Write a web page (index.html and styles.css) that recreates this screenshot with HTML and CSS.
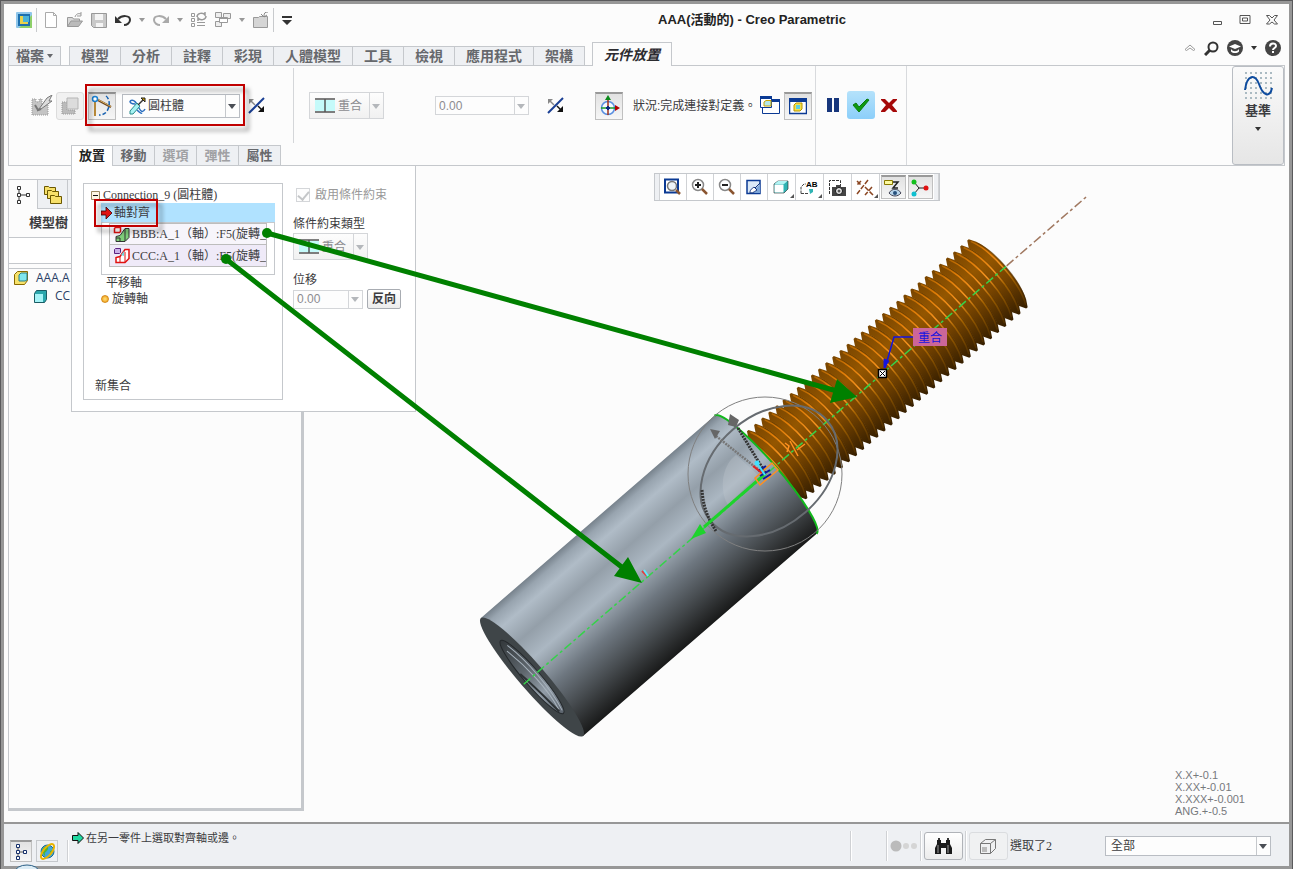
FILE: index.html
```html
<!DOCTYPE html>
<html lang="zh-Hant">
<head>
  <meta charset="UTF-8" />
  <meta name="viewport" content="width=device-width, initial-scale=1.0">
  <title>AAA(活動的) - Creo Parametric</title>
  <link rel="stylesheet" href="styles.css">
</head>
<body>
<div class="desktop">
<div class="window">

  <!-- Title bar -->
  <header class="titlebar">
    <div class="quick">
      <svg class="ic16" viewBox="0 0 16 16"><rect width="16" height="16" rx="1" fill="#8fc6ea"/><path d="M16 3v13H3z" fill="#8ed06a"/><rect x="2" y="2" width="12" height="12" fill="#1c6fae"/><rect x="4" y="4" width="8" height="8" fill="#e8d24a"/><rect x="7" y="4" width="6" height="6" fill="#49b3d8"/></svg>
      <span class="qsep"></span>
      <button title="新建"><svg class="ic16" viewBox="0 0 16 16"><path d="M2.500 .5h8l3 3v12h-11z" fill="#fff" stroke="#aaa"/><path d="M10.500 .5v3h3" fill="none" stroke="#aaa"/></svg></button>
      <button title="開啟"><svg class="ic16" viewBox="0 0 16 16"><path d="M.5 14.500v-9h5l1 1.500h6v2" fill="#d8d8d8" stroke="#999"/><path d="M.5 14.500L4 9h11.500l-4 5.500z" fill="#bbb" stroke="#999"/><path d="M8 5c1-3 3-4 6-3m0-2v4h-4" fill="none" stroke="#999"/></svg></button>
      <button title="儲存"><svg class="ic16" viewBox="0 0 16 16"><path d="M.5 1.500h15v14h-13l-2-2z" fill="#c9c9c9" stroke="#999"/><path d="M4 2h8v6H4zM5 11h7v4H5z" fill="#f5f5f5"/></svg></button>
      <button class="undo" title="復原"><svg class="ic16" viewBox="0 0 16 16"><path d="M3 7c4-4 12-4 12 1 0 3-3 5-6 5" fill="none" stroke="#333" stroke-width="2"/><path d="M0 4v7h7z" fill="#333"/></svg></button>
      <span class="caret light"></span>
      <button title="重做"><svg class="ic16" viewBox="0 0 16 16"><path d="M13 7C9 3 1 3 1 8c0 3 3 5 6 5" fill="none" stroke="#aaa" stroke-width="2"/><path d="M16 4v7H9z" fill="#aaa"/></svg></button>
      <span class="caret light"></span>
      <button title="重新產生"><svg class="ic16" viewBox="0 0 16 16" fill="none" stroke="#999"><path d="M.5 1.500h3v3h-3zM.5 6.500h3v3h-3zM.5 11.500h3v3h-3zM6 10.500h8M6 13.500h8"/><path d="M6 5c0-4 6-5 8-2V0M15 4c0 4-6 5-8 2v3" stroke-width="1.500"/></svg></button>
      <button title="視窗"><svg class="ic16" viewBox="0 0 16 16" fill="#eee" stroke="#999"><path d="M8.500 1.500h7v5h-7zM.5 .5h6v5h-6zM.5 9.500h6v5h-6z"/><path d="M4.500 5.500h8v5h-8z" fill="#fff"/><path d="M4.500 6.500h8"/></svg></button>
      <span class="caret light"></span>
      <button title="關閉"><svg class="ic16" viewBox="0 0 16 16"><path d="M.5 15.500v-10h5l1-1h8v11z" fill="#d5d5d5" stroke="#999"/><path d="M15 0c-3 0-4 1-4 4m-3-2l3 3 3-2" fill="none" stroke="#888"/></svg></button>
      <span class="qsep"></span>
      <button class="custom" title="自訂"><svg width="10" height="9" viewBox="0 0 10 9"><path d="M0 0h10v2H0zM0 4h10L5 9z" fill="#333"/></svg></button>
    </div>
    <h1>AAA(活動的) - Creo Parametric</h1>
    <div class="winbtns">
      <button title="最小化"><svg width="12" height="12" viewBox="0 0 12 12"><path d="M1.500 7.500h8v3h-8z" fill="none" stroke="#555"/></svg></button>
      <button title="最大化"><svg width="12" height="12" viewBox="0 0 12 12"><path d="M1 1.500h10v8H1zM3.500 4h5v3h-5z" fill="none" stroke="#555"/></svg></button>
      <button title="關閉視窗"><svg width="12" height="12" viewBox="0 0 12 12"><path d="M.5 1.500h3L6 4l2.500-2.500h3L8 6l3.500 4h-3L6 8l-2.500 2h-3L4 6z" fill="none" stroke="#555"/></svg></button>
    </div>
  </header>

  <!-- Ribbon tabs -->
  <nav class="tabs">
    <button class="tab file">檔案<span class="caret"></span></button>
    <div class="tabgroup">
      <button class="tab">模型</button>
      <button class="tab">分析</button>
      <button class="tab">註釋</button>
      <button class="tab">彩現</button>
      <button class="tab">人體模型</button>
      <button class="tab">工具</button>
      <button class="tab">檢視</button>
      <button class="tab">應用程式</button>
      <button class="tab">架構</button>
    </div>
    <button class="tab active">元件放置</button>
    <div class="help">
      <button title="最小化功能區"><svg width="12" height="8" viewBox="0 0 12 8"><path d="M1 5.500L6 1l5 4.500-1.500 1L6 4 2.500 6.500z" fill="#fff" stroke="#999"/></svg></button>
      <button title="搜尋"><svg width="15" height="15" viewBox="0 0 15 15"><circle cx="9" cy="6" r="4.500" fill="none" stroke="#333" stroke-width="2"/><path d="M6 9l-5 5" stroke="#333" stroke-width="3"/></svg></button>
      <button title="學習"><svg class="ic16" viewBox="0 0 16 16"><circle cx="8" cy="8" r="8" fill="#444"/><path d="M2 6.500L8 4l6 2.500L8 9z" fill="#fff"/><path d="M4 9c2 3 6 3 8 0v2.500c-2 2-6 2-8 0z" fill="#fff"/></svg></button>
      <span class="caret dark"></span>
      <button title="說明"><svg class="ic16" viewBox="0 0 16 16"><circle cx="8" cy="8" r="8" fill="#444"/><path d="M5 6.500C5 2.500 11 2.500 11 6c0 2-3 2-3 4" fill="none" stroke="#fff" stroke-width="2"/><path d="M7 11h2v2H7z" fill="#fff"/></svg></button>
    </div>
  </nav>

  <!-- Component placement dashboard -->
  <section class="ribbon">
    <div class="dash">
      <div class="dashrow">
        <div class="group first">
          <svg class="edit" width="22" height="22" viewBox="0 0 22 22"><path d="M1 4h4v3h3V4h3v6h6v10H1z" fill="#c4c4c4"/><path d="M1 4h4v3h3V4h3v6h6v10H1z" fill="none" stroke="#999" stroke-dasharray="1 1"/><path d="M8 14L16 3l5-3-3 6h3L10 14l-4 2z" fill="#ddd" stroke="#777"/><path d="M4 10l3 5 3-1" fill="none" stroke="#777" stroke-width="2"/></svg>
          <button class="tool off" title="介面"><svg width="18" height="18" viewBox="0 0 18 18"><path d="M1 5h5v8h8v4H1z" fill="#bbb" stroke="#999" stroke-dasharray="1 1"/><path d="M6 1h11v11H6z" fill="#dcdcdc" stroke="#b5b5b5"/></svg></button>
          <button class="tool pressed" title="連接"><svg width="22" height="22" viewBox="0 0 22 22"><path d="M4 4v17" stroke="#b88a3a" stroke-width="2"/><path d="M5 4l15 8" stroke="#6b4520" stroke-width="2"/><path d="M5 3.500l15 8" stroke="#d8b060" stroke-width="1"/><circle cx="4" cy="4" r="2.500" fill="#fff" stroke="#1a7fd0" stroke-width="1.500"/><path d="M15 1c3 2 5 9 1 15-2 3-5 4-8 4" fill="none" stroke="#1660b0" stroke-width="1.500" stroke-dasharray="4 2"/></svg></button>
        </div>
        <label class="combo kind">
          <svg width="18" height="18" viewBox="0 0 18 18"><path d="M2 4c4-3 7 3 9 7s4 5 6 1M2 4c0 3 3 3 5 3M9 13c2 2 4 4 5 3" fill="none" stroke="#2a6fc0" stroke-width="1.500"/><path d="M2 14l7-8 3 3-7 8H2z" fill="#a6f3f3" stroke="#2b8c8c"/><path d="M10 8l6-6" stroke="#333" stroke-width="1.500"/><path d="M13 1h4v4z" fill="#c79a00" stroke="#222"/></svg>
          <select aria-label="連接類型"><option>圓柱體</option></select>
        </label>
        <svg class="flip" width="17" height="17" viewBox="0 0 17 17"><path d="M1 16L16 1" stroke="#1a3f94" stroke-width="2"/><path d="M1 2h5L1 7z" fill="#888"/><path d="M3 4l4 4" stroke="#888" stroke-width="1.500"/><path d="M16 15h-6l6-6z" fill="#111"/><path d="M10 9l4 4" stroke="#111" stroke-width="1.500"/></svg>
        <span class="vsep"></span>
        <label class="combo type off">
          <svg width="21" height="15" viewBox="0 0 21 15"><path d="M0 2h20v11H0z" fill="#c5fafa"/><path d="M0 1h20M0 14h20M10 1v13" stroke="#555" stroke-width="1.500"/></svg>
          <select aria-label="條件約束" disabled><option>重合</option></select>
        </label>
        <div class="combo value off"><input type="text" value="0.00" aria-label="偏移" disabled></div>
        <svg class="flip two" width="17" height="17" viewBox="0 0 17 17"><path d="M1 16L16 1" stroke="#1a3f94" stroke-width="2"/><path d="M1 2h5L1 7z" fill="#888"/><path d="M3 4l4 4" stroke="#888" stroke-width="1.500"/><path d="M16 15h-6l6-6z" fill="#111"/><path d="M10 9l4 4" stroke="#111" stroke-width="1.500"/></svg>
        <button class="tool pressed csys" title="3D 拖曳器"><svg width="22" height="22" viewBox="0 0 22 22"><circle cx="10" cy="13" r="6.500" fill="#f4faff" stroke="#5a8fe0" stroke-width="1.500"/><path d="M10 4v16" stroke="#a03018" stroke-width="1.500"/><path d="M3 13h15" stroke="#1a9a2a" stroke-width="1.500"/><path d="M8 13h4M10 11v4" stroke="#0a2a80" stroke-width="2"/><path d="M7 5l3-5 3 5z" fill="#0a8a1a"/><path d="M17 10l5 3-5 3z" fill="#b00000"/></svg></button>
        <span class="status">狀況:完成連接對定義。</span>
        <div class="group">
          <svg width="20" height="19" viewBox="0 0 20 19"><path d="M2.500 6v11.500h17V4" fill="#fff" stroke="#0b3a94"/><path d="M12 3h8v3h-8z" fill="#0b3a94"/><path d="M.5 1.500h11v10H.5z" fill="#fff" stroke="#0b3a94"/><path d="M0 0h12v3H0z" fill="#0b3a94"/><path d="M4 6l2-1.500h5V10H4z" fill="#b5e8e8" stroke="#c9a400"/></svg>
          <button class="tool pressed" title="在組合視窗顯示"><svg width="18" height="17" viewBox="0 0 18 17"><path d="M.5 .5h17v15H.5z" fill="#fff" stroke="#0b3a94" stroke-width="1.500"/><path d="M0 0h18v4H0z" fill="#0b3a94"/><path d="M5 7l2-2h6v6l-2 2H5z" fill="#f3e14a" stroke="#b79400"/><path d="M7 7h4v4H7z" fill="#5fd0e0"/></svg></button>
        </div>
      </div>
      <div class="subtabs">
        <button class="active">放置</button>
        <button>移動</button>
        <button class="off">選項</button>
        <button class="off">彈性</button>
        <button>屬性</button>
      </div>
    </div>
    <div class="actions">
      <button class="tool bare" title="暫停"><svg width="12" height="14" viewBox="0 0 12 14"><path d="M0 0h5v14H0zM7 0h5v14H7z" fill="#17367c"/></svg></button>
      <button class="tool ok" title="確定"><svg width="18" height="15" viewBox="0 0 18 15"><path d="M1 7l3-2 3 4 8-8 2 1-10 12z" fill="#0e9a10" stroke="#0a7a0c"/></svg></button>
      <button class="tool bare" title="取消"><svg width="16" height="15" viewBox="0 0 16 15"><path d="M0 1h4l4 4 4-4h4v1l-5 5 5 6v1h-4L8 10l-4 4H0v-1l5-6-5-5z" fill="#a50808"/></svg></button>
    </div>
    <button class="datum">
      <svg width="29" height="28" viewBox="0 0 29 28"><path d="M1 1h28M1 6h28M1 11h28M1 16h28M1 21h28M1 26h28" stroke="#aabac2" stroke-width="2" stroke-dasharray="2 3"/><path d="M1 18C3 2 11 2 15 12c4 12 11 14 13 4" fill="none" stroke="#0c4a9e" stroke-width="2"/></svg>
      <span>基準</span>
      <span class="caret dark"></span>
    </button>
  </section>

  <!-- Work area -->
  <main class="workspace">
    <aside class="navigator">
      <div class="navtabs">
        <button class="active" title="模型樹"><svg width="14" height="18" viewBox="0 0 14 18" fill="none" stroke="#333"><path d="M1.500 .5h3v3h-3zM1.500 7.500h3v3h-3zM1.500 14.500h3v3h-3zM10.500 7.500h3v3h-3zM3 4v3M3 11v3M5 9h5"/></svg></button>
        <button title="資料夾"><svg width="18" height="19" viewBox="0 0 18 19" fill="#f7e06a" stroke="#6b5800"><path d="M.5 9.500v-8h4l1 1h6v7z"/><path d="M3.500 13.500v-8h4l1 1h6v7z"/><path d="M6.500 18.500v-8h4l1 1h6v7z"/></svg></button>
        <button title="我的最愛"></button>
      </div>
      <div class="navpanel">
        <h2>模型樹</h2>
        <div class="filter"></div>
        <ul class="tree">
          <li><svg width="14" height="15" viewBox="0 0 14 15"><path d="M.5 3.500l3-3h10v9l-3 4H.5z" fill="#f7e26a" stroke="#8a6a00"/><path d="M5 4l2-2h6v7l-2 1H5z" fill="#7fe6ee" stroke="#2b7f88"/></svg>AAA.A</li>
          <li class="child"><svg width="13" height="13" viewBox="0 0 13 13"><path d="M.5 3.500l2-3h10v9l-2 3H.5z" fill="#2ba7ad" stroke="#1b5c64"/><path d="M1 4h8v8H1z" fill="#a5f3f7"/></svg>CC</li>
        </ul>
      </div>
    </aside>

    <div class="view">
      <!-- Bolt and sleeve; both parts share the axis, local x runs along it -->
      <svg class="model">
        <defs>
          <linearGradient id="steel" gradientUnits="userSpaceOnUse" x1="0" y1="-78" x2="0" y2="78">
            <stop offset="0" stop-color="#77828c"/><stop offset=".05" stop-color="#98a4af"/><stop offset=".13" stop-color="#b0bcc7"/><stop offset=".27" stop-color="#949fa9"/><stop offset=".41" stop-color="#abb7c2"/><stop offset=".5" stop-color="#929da7"/><stop offset=".62" stop-color="#6e7780"/><stop offset=".8" stop-color="#474c50"/><stop offset=".93" stop-color="#292b2c"/><stop offset="1" stop-color="#191a1a"/>
          </linearGradient>
          <linearGradient id="brass" gradientUnits="userSpaceOnUse" x1="0" y1="-44" x2="0" y2="44">
            <stop offset="0" stop-color="#7a4600"/><stop offset=".3" stop-color="#945600"/><stop offset=".6" stop-color="#774400"/><stop offset="1" stop-color="#382000"/>
          </linearGradient>
          <linearGradient id="edge" gradientUnits="userSpaceOnUse" x1="0" y1="-44" x2="0" y2="44">
            <stop offset="0" stop-color="#a86000"/><stop offset=".2" stop-color="#e07c06"/><stop offset=".45" stop-color="#f59422"/><stop offset=".65" stop-color="#a06000"/><stop offset="1" stop-color="#4a2b00"/>
          </linearGradient>
          <linearGradient id="bore" gradientUnits="userSpaceOnUse" x1="0" y1="-48" x2="0" y2="48">
            <stop offset="0" stop-color="#33383b"/><stop offset=".4" stop-color="#5e666d"/><stop offset=".7" stop-color="#929da8"/><stop offset="1" stop-color="#59616a"/>
          </linearGradient>
          <g id="t1">
            <path d="M-5-38L-1-45H1L5-38C13-20 13 20 5 38L1 45H-1L-5 38C3 20 3-20-5-38z" fill="url(#brass)"/>
            <path d="M5-36C13-18 13 18 5 36" fill="none" stroke="#4a2b00" stroke-opacity=".45"/>
            <path d="M1-42C11-22 11 22 1 42" fill="none" stroke="url(#edge)" stroke-width="1.500"/>
          </g>
          <g id="t2"><use href="#t1"/><use href="#t1" x="9.400"/></g>
          <g id="t4"><use href="#t2"/><use href="#t2" x="18.800"/></g>
          <g id="t8"><use href="#t4"/><use href="#t4" x="37.600"/></g>
          <g id="t16"><use href="#t8"/><use href="#t8" x="75.200"/></g>
        </defs>
        <g transform="translate(-304 -166)">
          <g transform="translate(532 677) rotate(-40.900)">
            <use href="#t16" x="315"/>
            <use href="#t16" x="465.400"/>
            <use href="#t1" x="615.800"/>
            <path d="M0-78H309A13 78 0 0 1 309 78H0z" fill="url(#steel)"/>
            <path d="M309-78A13 78 0 0 1 309 78" fill="none" stroke="#12b81c" stroke-width="2"/>
            <ellipse cx="0" cy="0" rx="13" ry="78" fill="#3f4548"/>
            <ellipse cx="0" cy="0" rx="8" ry="48" fill="url(#bore)" stroke="#24282b"/>
            <path d="M2-40C7-15 7 20 1 45M-2-36C3-10 4 20-1 42" fill="none" stroke="#a9b4be"/>
            <path d="M-7-10C-4 10-3 30-2 44" fill="none" stroke="#2d3235" stroke-width="2"/>
            <path d="M-11 0H627" stroke="#35d24a" stroke-width="1.500" stroke-dasharray="9 3 3 3"/>
            <path d="M628 0H733" stroke="#a07860" stroke-width="1.500" stroke-dasharray="9 3 3 3"/>
          </g>
          <!-- 3D dragger -->
          <path d="M728 505c-8-12-8-38 8-50l22 20-30 30z" fill="#c3cad0" opacity=".3"/>
          <circle cx="765" cy="474" r="77" fill="none" stroke="#808080"/>
          <ellipse cx="769" cy="471" rx="77" ry="55" transform="rotate(-41 769 471)" fill="none" stroke="#666b70" stroke-width="2"/>
          <path d="M738 428l28 46M702 490c1 12 3 24 14 41" fill="none" stroke="#333" stroke-width="3" stroke-dasharray="2 1"/>
          <path d="M716 436l48 38" stroke="#777" stroke-width="2.500" stroke-dasharray="2 1"/>
          <path d="M710 429l10 2-5 8zM730 414l9 6-3 7-8-2z" fill="#666"/>
          <path d="M764 475l-60 52" stroke="#1ed32c" stroke-width="3"/>
          <path d="M691 539l9-15 6 9z" fill="#1ed32c"/>
          <path d="M755 478l17-15 6 7-18 15zM785 443l4 3-2 6M790 441l8 15M797 450l8-6" fill="none" stroke="#ff9020" stroke-width="1.500"/>
          <path d="M758 471l8-5M760 476l10-6M763 479l8-5" stroke="#101a9a" stroke-width="2"/>
          <path d="M753 466l9 7" stroke="#e02020" stroke-width="2"/><path d="M757 463l8 12" stroke="#40e0ff" stroke-width="2"/><circle cx="757" cy="463" r="2.500" fill="#40e0ff"/>
          <path d="M642 571l5 5" stroke="#e04040" stroke-width="2"/><path d="M644 570l4 6" stroke="#60e8ff" stroke-width="2"/>
          <!-- constraint tag -->
          <path d="M913 337h-19l-9 31" fill="none" stroke="#1414e0" stroke-width="1.500"/>
          <path d="M884 368l0-9 5 2z" fill="#1414e0" stroke="#1414e0"/>
          <path d="M878.500 369.500h8v8h-8z" fill="#fff" stroke="#000" stroke-width="1.500"/><path d="M880 371l5 5M885 371l-5 5" stroke="#000"/>
          <rect x="913" y="328" width="34" height="18" fill="#cc6699"/>
          <text class="tag" x="918" y="342">重合</text>
        </g>
      </svg>

      <div class="viewbar">
        <span class="grip"></span>
        <button title="重新調整"><svg width="18" height="18" viewBox="0 0 18 18"><path d="M1 1.500h13v13H1z" fill="#fff" stroke="#0b3a94" stroke-width="2"/><circle cx="8" cy="8" r="4.500" fill="#eef4f8" stroke="#777" stroke-width="1.500"/><path d="M12 12l4 4" stroke="#8a5530" stroke-width="2.500"/></svg></button>
        <button title="放大"><svg width="18" height="18" viewBox="0 0 18 18"><circle cx="7" cy="7" r="5.500" fill="#fff" stroke="#888" stroke-width="1.500"/><path d="M4 7h6M7 4v6" stroke="#222" stroke-width="2"/><path d="M11 11l5 5" stroke="#8a5530" stroke-width="2.500"/></svg></button>
        <button title="縮小"><svg width="18" height="18" viewBox="0 0 18 18"><circle cx="7" cy="7" r="5.500" fill="#fff" stroke="#888" stroke-width="1.500"/><path d="M4 7h6" stroke="#222" stroke-width="2"/><path d="M11 11l5 5" stroke="#8a5530" stroke-width="2.500"/></svg></button>
        <button title="重繪"><svg width="16" height="16" viewBox="0 0 16 16"><path d="M1 1.500h13v13H1z" fill="#dbe9f7" stroke="#0b3a94" stroke-width="1.500"/><path d="M14 5v9H5z" fill="#7ea6d8"/><path d="M4 14c0-4 2-4 4-6l3 3c-2 1-3 3-7 3z" fill="#fff" stroke="#17367c"/><path d="M9 9l5-5" stroke="#17367c"/></svg></button>
        <button class="more" title="顯示樣式"><svg width="16" height="14" viewBox="0 0 16 14"><path d="M1 4l4-3h10v8l-4 4H1z" fill="#2fb3b3" stroke="#222" stroke-opacity=".6"/><path d="M1.500 4.500h9v8h-9z" fill="#fff"/><path d="M1.500 4l3.500-3h9.500L11 4z" fill="#b2f4f4"/></svg></button>
        <button class="more" title="已儲存方向"><svg width="18" height="16" viewBox="0 0 18 16"><path d="M1 14.500V8l3-3h2M1 14.500h7" fill="none" stroke="#444" stroke-dasharray="3 1"/><path d="M9 10h4v3l-3 2z" fill="#2fb3b3"/><text class="glyph" x="6" y="8">AB</text></svg></button>
        <button class="wide" title="視圖管理員"><svg width="18" height="17" viewBox="0 0 18 17"><path d="M1.500 15V1.500h11V6" fill="none" stroke="#333" stroke-dasharray="3 1"/><path d="M4 8h14v9H4z" fill="#444"/><path d="M8 6h5v3H8z" fill="#444"/><circle cx="11" cy="12" r="3.500" fill="#eee" stroke="#111"/><circle cx="11" cy="12" r="1.500" fill="#555"/></svg></button>
        <button class="more" title="基準顯示"><svg width="18" height="17" viewBox="0 0 18 17" stroke="#8a4520" stroke-width="1.500" fill="none"><path d="M1 2l4 4M5 2L1 6M12 1L1 15M9 8l8 8M16 8l-7 8" stroke-dasharray="5 1.500"/></svg></button>
        <button class="on" title="註釋顯示"><svg width="18" height="18" viewBox="0 0 18 18"><path d="M.5 1.500h8v4h-8z" fill="#fdfaa0" stroke="#8a7a00"/><path d="M9 3h5l-5 6h5" fill="none" stroke="#222" stroke-width="1.500"/><path d="M5 14c3-5 9-5 12 0-3 4-9 4-12 0z" fill="#b9d5ea" stroke="#445"/><circle cx="11" cy="14" r="2" fill="#27507c"/></svg></button>
        <button class="on" title="旋轉中心"><svg width="18" height="18" viewBox="0 0 18 18"><path d="M3 3l5 6h8M8 9l-5 6" fill="none" stroke="#222"/><circle cx="3" cy="3" r="2.500" fill="#14c01c"/><circle cx="15" cy="9" r="2.500" fill="#e01010"/><circle cx="3" cy="15" r="2.500" fill="#10c0d0"/></svg></button>
        <span class="grip"></span>
      </div>

      <div class="tolerance">X.X+-0.1<br>X.XX+-0.01<br>X.XXX+-0.001<br>ANG.+-0.5</div>
    </div>

    <!-- Placement slide-down panel -->
    <section class="placement">
      <div class="sets">
        <div class="sethead"><svg width="9" height="9" viewBox="0 0 9 9"><path d="M.5 .5h8v8h-8z" fill="#fff7e4" stroke="#9a8a60"/><path d="M2 4.500h5" stroke="#111"/></svg>Connection_9 (圓柱體)</div>
        <div class="constraint">
          <div class="current"><svg width="11" height="12" viewBox="0 0 11 12"><path d="M0 4h5V0l6 6-6 6V8H0z" fill="#e01414" stroke="#3a0000" stroke-width=".8"/></svg>軸對齊</div>
          <div class="refs">
            <div class="ref"><svg width="18" height="17" viewBox="0 0 18 17"><path d="M1.500 2.500l1-1h5v4l-1 1h-5z" fill="#fff" stroke="#e01010" stroke-width="1.500"/><path d="M3 15.500v-5l4-1 5-7h4v9l-4 4z" fill="#7fcf7a" stroke="#333"/><path d="M3 12h4v4M12 3v12" stroke="#333" fill="none"/></svg>BBB:A_1（軸）:F5(旋轉_</div>
            <div class="ref second"><svg width="18" height="17" viewBox="0 0 18 17"><path d="M1.500 2.500l1-1h5v4l-1 1h-5z" fill="#c9b0e8" stroke="#5a2080"/><path d="M3 15.500v-5l4-1 5-7h4v9l-4 4z" fill="#fff" stroke="#e01010" stroke-width="1.500"/><path d="M7 10v5M12 5v10" stroke="#e01010"/><path d="M8 8l3-4v5z" fill="#6fd8e0"/></svg>CCC:A_1（軸）:F5(旋轉_</div>
          </div>
        </div>
        <div class="dof plain">平移軸</div>
        <div class="dof"><span class="orb"></span>旋轉軸</div>
        <div class="newset">新集合</div>
      </div>
      <div class="options">
        <label class="enable"><input type="checkbox" checked disabled>啟用條件約束</label>
        <label class="cap" for="ctype">條件約束類型</label>
        <div class="combo type off">
          <svg width="21" height="15" viewBox="0 0 21 15"><path d="M0 2h20v11H0z" fill="#c5fafa"/><path d="M0 1h20M0 14h20M10 1v13" stroke="#555" stroke-width="1.500"/></svg>
          <select id="ctype" disabled><option>重合</option></select>
        </div>
        <label class="cap offset" for="off">位移</label>
        <div class="offrow">
          <div class="combo value small off"><input type="text" id="off" value="0.00" disabled></div>
          <button class="flipbtn">反向</button>
        </div>
      </div>
    </section>
  </main>

  <!-- Status bar -->
  <footer class="statusbar">
    <div class="toggles">
      <button class="pressed" title="導覽器"><svg width="12" height="16" viewBox="0 0 12 16" fill="#fff" stroke="#17306a"><path d="M3 4v8M4 8h5" stroke="#555"/><path d="M1.500 .5h3v3h-3zM1.500 6.500h3v3h-3zM1.500 12.500h3v3h-3zM8.500 6.500h3v3h-3z"/></svg></button>
      <button title="瀏覽器"><svg width="17" height="17" viewBox="0 0 17 17"><circle cx="8.500" cy="8.500" r="6.500" fill="#3fa8d8" stroke="#1b6a94"/><path d="M4 5c3-3 6-2 5 1s-4 3-3 6-4-3-2-7zM11 8l3-1-2 5z" fill="#4fb52e"/><ellipse cx="8.500" cy="8.500" rx="9" ry="4" transform="rotate(-50 8.500 8.500)" fill="none" stroke="#e8b400" stroke-width="2"/></svg></button>
    </div>
    <span class="ssep short"></span>
    <div class="message"><svg width="12" height="12" viewBox="0 0 12 12"><path d="M.5 3.500H6V.5L11.500 6 6 11.500v-3H.5z" fill="#1fd8a0" stroke="#111"/></svg>在另一零件上選取對齊軸或邊。</div>
    <span class="ssep wide"></span>
    <span class="ssep"></span>
    <svg class="dots" width="28" height="12" viewBox="0 0 28 12"><circle cx="6" cy="6" r="5.500" fill="#bbb"/><circle cx="16" cy="6" r="3" fill="#d5d5d5"/><circle cx="24" cy="6" r="3" fill="#d5d5d5"/></svg>
    <span class="ssep"></span>
    <button class="big" title="尋找"><svg width="17" height="17" viewBox="0 0 17 17"><path d="M2 2h4v3h5V2h4v4l2 4v6h-6v-6H6v6H0v-6l2-4z" fill="#1a1a1a"/><path d="M3 7v8M13 7v8" stroke="#999"/><path d="M3 0h2v2H3zM12 0h2v2h-2z" fill="#333"/></svg></button>
    <span class="ssep"></span>
    <button class="big off" title="幾何"><svg width="18" height="17" viewBox="0 0 18 17" fill="none" stroke="#777"><path d="M1.500 5.500l5-4h10v9l-5 5h-10zM1.500 5.500h10v10M11.500 5.500l5-4"/><path d="M3 9h5v5H3z" fill="#bbb" stroke="none"/></svg></button>
    <span class="count">選取了2</span>
    <label class="combo filtersel"><select aria-label="選取過濾器"><option>全部</option></select></label>
  </footer>
</div>

<!-- Callouts drawn over the whole window -->
<svg class="callouts">
  <g class="boxes"><rect x="86" y="85" width="158" height="40"/><rect x="95" y="200" width="62" height="26"/></g>
  <g stroke="#008000" stroke-width="5"><path d="M267 233l570 158M226 259l397 309"/></g>
  <g fill="#008000"><circle cx="267" cy="233" r="5"/><circle cx="226" cy="259" r="5"/><path d="M857 397l-20-18-7 24zM642 583l-14-26-14 19z"/></g>
  <ellipse cx="27" cy="872" rx="12" ry="7" fill="#dcecf5" stroke="#2a5f86"/>
</svg>
</div>
</body>
</html>
```
FILE: styles.css
```css
html, body {
  margin: 0;
  padding: 0;
  overflow: hidden;
}

body {
  font-family: "Liberation Sans", "Noto Sans CJK TC", sans-serif;
  font-size: 12px;
  line-height: 16px;
  color: #3c3c40;
}

* {
  box-sizing: border-box;
}

button, select, input {
  font: inherit;
  color: inherit;
  margin: 0;
  padding: 0;
}

button {
  background: none;
  border: none;
  display: flex;
  align-items: center;
  justify-content: center;
  flex: none;
}

svg {
  display: block;
  flex: none;
}

h1, h2, ul {
  margin: 0;
  padding: 0;
  list-style: none;
}

.ic16 {
  width: 16px;
  height: 16px;
}

.desktop {
  position: relative;
  height: 100vh;
  padding: 3px;
  background: #979797;
  border: 1px solid #5a5a5c;
  border-bottom: none;
}

.window {
  height: 100%;
  display: flex;
  flex-direction: column;
  background: #fcfcfc;
}

.caret {
  border: 3px solid transparent;
  border-top: 4px solid #66686c;
  border-bottom: none;
  flex: none;
}

.caret.light { border-top-color: #999; }
.caret.dark { border-top-color: #333; }

/* Title bar */
.titlebar {
  display: flex;
  align-items: center;
  height: 32px;
  flex: none;
  padding: 0 11px 0 12px;
}

.quick {
  display: flex;
  align-items: center;
  gap: 8px;
}

.quick .qsep {
  width: 1px;
  height: 24px;
  background: #c8cacd;
  margin: 0 -2px 0 -4px;
}

.quick .custom { margin-left: 2px; }

.titlebar h1 {
  flex: 1;
  text-align: center;
  font-size: 13px;
  font-weight: bold;
  color: #222;
}

.winbtns {
  display: flex;
  gap: 15px;
}

/* Ribbon tabs */
.tabs {
  display: flex;
  align-items: flex-end;
  height: 30px;
  flex: none;
  padding: 0 8px 0 4px;
  margin-bottom: -1px;
  position: relative;
  z-index: 3;
}

.tab {
  height: 20px;
  padding: 0 11px;
  border: 1px solid #c5c8cc;
  border-left: none;
  background: #eef0f3;
  font-size: 14px;
  font-weight: bold;
  color: #66686c;
}

.tab.file {
  border-left: 1px solid #c5c8cc;
  padding: 0 7px;
  gap: 3px;
  margin-right: 8px;
}

.tabgroup {
  display: flex;
  border-left: 1px solid #c5c8cc;
}

.tab.active {
  height: 24px;
  margin-left: 7px;
  background: #fcfcfc;
  border-left: 1px solid #c5c8cc;
  border-bottom: none;
  font-style: italic;
  color: #2c2c30;
}

.help {
  display: flex;
  align-items: center;
  gap: 8px;
  margin: 0 0 10px auto;
}

/* Dashboard */
.ribbon {
  display: flex;
  flex: none;
  margin: 0 4px;
  border: 1px solid #c5c8cc;
  position: relative;
  z-index: 2;
}

.dash {
  display: flex;
  flex-direction: column;
  border-right: 1px solid #d8dadd;
}

.dashrow {
  display: flex;
  align-items: center;
  height: 79px;
  padding: 0 3px 0 22px;
}

.group {
  display: flex;
  align-items: center;
  gap: 4px;
  margin-left: 4px;
}

.group.first { margin: 0 6px 0 0; }

.tool {
  width: 28px;
  height: 28px;
  border-radius: 3px;
}

.tool.off {
  background: #f1f1f1;
  border: 1px solid #dcdcdc;
}

.tool.pressed, .viewbar .on, .toggles .pressed {
  background: linear-gradient(#e2e2e2, #f6f6f6);
  border: 1px solid #c0c0c0;
  border-top: 2px solid #999;
  border-radius: 0;
}

.tool.ok {
  background: linear-gradient(#b5e2fb, #8ccffa);
}

.combo {
  position: relative;
  display: flex;
  align-items: center;
  flex: none;
  background: #fdfdfd;
  border: 1px solid #b9bdc3;
  height: 24px;
  padding-left: 5px;
}

.combo select, .combo input {
  appearance: none;
  flex: 1;
  min-width: 0;
  height: 100%;
  border: none;
  background: transparent;
  padding-left: 2px;
}

.combo::after {
  content: "";
  position: absolute;
  right: 3px;
  top: 50%;
  margin-top: -2px;
  border: 4px solid transparent;
  border-top: 5px solid #4a4e55;
  border-bottom: none;
}

.combo::before {
  content: "";
  position: absolute;
  right: 13px;
  top: 0;
  bottom: 0;
  border-left: 1px solid #c5c8cc;
}

.combo.off {
  border-color: #d4d6d9;
}

.combo.off::after { border-top-color: #b4b7bb; }
.combo.off::before { border-color: #d4d6d9; }

.combo.off select, .combo.off input {
  color: #8c8c90;
  opacity: 1;
}

.combo.kind { width: 118px; }

.combo.type {
  width: 75px;
  height: 27px;
  background: linear-gradient(#fdfdfd, #f1f1f1);
}

.combo.value {
  width: 94px;
  height: 19px;
  padding-left: 1px;
}

.combo.value.small { width: 70px; }

.dashrow .value { margin-left: 51px; }

.flip { margin: 0 28px 0 8px; }
.flip.two { margin: 0 31px 0 18px; }

.vsep {
  width: 1px;
  height: 75px;
  background: #d4d6d9;
  margin-right: 15px;
}

.edit { margin-right: -1px; }

.status {
  margin-left: 10px;
  white-space: nowrap;
}

.subtabs {
  display: flex;
  height: 21px;
  margin: 0 0 -1px 62px;
  position: relative;
  border-left: 1px solid #c5c8cc;
}

.subtabs button {
  width: 42px;
  border: 1px solid #c5c8cc;
  border-left: none;
  background: #eef0f3;
  font-size: 13px;
  font-weight: bold;
  color: #66686c;
}

.subtabs .off { color: #a0a1a4; }

.subtabs .active {
  width: 41px;
  background: #fff;
  border-bottom: none;
  color: #222;
}

.actions {
  display: flex;
  padding: 25px 3px 0;
  border-right: 1px solid #d8dadd;
}

.datum {
  flex-direction: column;
  justify-content: flex-start;
  gap: 8px;
  width: 52px;
  margin-left: auto;
  padding-top: 5px;
  border: 1px solid #b9bdc3;
  border-radius: 3px;
  background: linear-gradient(#fafafa, #e6e6e6);
  font-size: 13px;
  font-weight: bold;
}

.datum span { margin-top: -5px; }
.datum .caret { margin-top: 0; }

/* Work area */
.workspace {
  display: flex;
  flex: 1;
  min-height: 0;
  position: relative;
}

.navigator {
  display: flex;
  flex-direction: column;
  width: 300px;
  flex: none;
  padding: 13px 0 11px 4px;
}

.navtabs {
  display: flex;
  height: 30px;
  margin-bottom: -1px;
  position: relative;
  border-left: 1px solid #c5c8cc;
}

.navtabs button {
  width: 30px;
  border: 1px solid #c5c8cc;
  border-left: none;
  background: #eef0f3;
}

.navtabs .active {
  width: 29px;
  background: #fcfcfc;
  border-bottom: none;
}

.navpanel {
  flex: 1;
  border: 1px solid #c5c8cc;
  border-right: 3px solid #c5c8cc;
  border-bottom: 3px solid #c5c8cc;
}

.navpanel h2 {
  font-size: 13px;
  line-height: 16px;
  padding: 6px 0 6px 20px;
}

.filter {
  height: 27px;
  background: #fff;
  border: 1px solid #c5c8cc;
  border-left: none;
}

.tree {
  margin-top: 4px;
  border-top: 1px solid #c5c8cc;
  font-family: "Open Sans", "Noto Sans CJK TC", sans-serif;
  color: #2b3f66;
}

.tree li {
  display: flex;
  align-items: center;
  gap: 8px;
  height: 18px;
  padding-left: 5px;
}

.tree .child { padding-left: 25px; }

.view {
  flex: 1;
  min-width: 0;
  display: flex;
  flex-direction: column;
  align-items: center;
  justify-content: space-between;
  position: relative;
}

.model {
  position: absolute;
  top: 0;
  left: 0;
  width: 100%;
  height: 100%;
}

.tag {
  font-size: 12px;
  fill: #1414e0;
}

.viewbar {
  display: flex;
  margin-top: 7px;
  height: 28px;
  position: relative;
  border: 1px solid #c5c8cc;
  background: #fff;
}

.viewbar button {
  width: 27px;
  position: relative;
  border-right: 1px solid #d0d2d5;
}

.viewbar .more, .viewbar .wide { width: 28px; }
.viewbar .on { margin: 1px; width: 25px; }

.viewbar .more::after {
  content: "";
  position: absolute;
  right: 1px;
  bottom: 2px;
  border: 2px solid #555;
  border-top-color: transparent;
  border-left-color: transparent;
}

.grip {
  width: 5px;
  background: #eef0f3;
  border-right: 1px solid #d0d2d5;
}

.glyph {
  font-size: 8px;
  font-weight: bold;
}

.tolerance {
  align-self: flex-end;
  margin: 0 44px 5px 0;
  font-size: 11px;
  line-height: 12px;
  color: #77797c;
  position: relative;
}

/* Placement panel */
.placement {
  position: absolute;
  top: 0;
  left: 67px;
  width: 345px;
  height: 246px;
  display: flex;
  gap: 10px;
  padding: 17px 13px 11px 11px;
  background: #fff;
  border: 1px solid #c5c8cc;
  border-top: none;
}

.sets {
  display: flex;
  flex-direction: column;
  width: 200px;
  padding: 3px 7px 5px;
  border: 1px solid #c5c8cc;
  font-family: "Liberation Serif", "Noto Sans CJK TC", serif;
}

.sethead {
  display: flex;
  align-items: center;
  gap: 3px;
}

.constraint { margin: 0 0 0 10px; }

.current {
  display: flex;
  align-items: center;
  gap: 2px;
  height: 19px;
  background: #b0e2ff;
}

.refs {
  padding: 0 7px 7px;
  border: 1px solid #c5c8cc;
}

.ref {
  display: flex;
  align-items: center;
  gap: 1px;
  height: 22px;
  padding-left: 3px;
  overflow: hidden;
  white-space: nowrap;
  background: #f7f5fb;
  border: 1px solid #bdbdbd;
}

.second {
  background: #efeaf8;
  border-top: none;
}

.dof {
  display: flex;
  align-items: center;
  gap: 3px;
  padding-left: 10px;
}

.dof.plain { padding-left: 15px; }

.orb {
  width: 8px;
  height: 8px;
  border-radius: 50%;
  background: radial-gradient(#ffe27a, #f0960c);
  border: 1px solid #d48a1c;
}

.newset {
  margin-top: auto;
  padding-left: 4px;
}

.options {
  display: flex;
  flex-direction: column;
  align-items: flex-start;
  padding-top: 4px;
}

.enable {
  display: flex;
  align-items: center;
  gap: 5px;
  padding-left: 3px;
  color: #999;
}

.enable input {
  appearance: none;
  display: flex;
  justify-content: center;
  width: 14px;
  height: 14px;
  border: 1px solid #d4d6d9;
  background: #fdfdfd;
}

.enable input::after {
  content: "";
  width: 5px;
  height: 9px;
  border: solid #c4c6c8;
  border-width: 0 2px 2px 0;
  transform: rotate(40deg);
}

.cap { margin: 13px 0 1px; }
.cap.offset { margin: 12px 0 1px; }

.offrow {
  display: flex;
  align-items: center;
  gap: 4px;
}

.flipbtn {
  width: 34px;
  height: 20px;
  border: 1px solid #a8acb2;
  border-radius: 2px;
  background: linear-gradient(#fff, #ececec);
  font-weight: bold;
}

/* Status bar */
.statusbar {
  display: flex;
  align-items: center;
  flex: none;
  height: 44px;
  padding: 2px 18px 0 6px;
  border-top: 2px solid #979797;
  background: #eef0f3;
}

.toggles {
  display: flex;
  gap: 4px;
  align-self: flex-end;
  padding: 0 9px 4px 0;
}

.toggles button {
  width: 22px;
  height: 22px;
  border: 1px solid #c5c8cc;
}

.message {
  display: flex;
  align-items: center;
  gap: 2px;
  flex: 1;
  align-self: flex-start;
  margin-top: 4px;
  padding-left: 3px;
  font-size: 11px;
}

.ssep {
  width: 2px;
  height: 30px;
  border-left: 1px solid #cfd1d4;
  border-right: 1px solid #fff;
}

.ssep.wide { margin-right: 34px; }

.ssep.short {
  height: 22px;
  align-self: flex-end;
  margin-bottom: 4px;
}

.dots { margin: 0 2px; }

.big {
  width: 39px;
  height: 28px;
  margin: 0 2px;
  border: 1px solid #b0b3b8;
  border-radius: 3px;
  background: linear-gradient(#fff, #ececec);
}

.big.off {
  border-color: #dadcdf;
  background: #f0f1f2;
}

.count {
  font-family: "Liberation Serif", "Noto Sans CJK TC", serif;
}

.filtersel {
  width: 166px;
  height: 20px;
  margin-left: 53px;
  padding-left: 3px;
}

/* Callouts */
.callouts {
  position: absolute;
  top: -1px;
  left: -1px;
  width: 100vw;
  height: 100vh;
  z-index: 10;
  pointer-events: none;
}

.boxes {
  fill: none;
  stroke: #c00000;
  stroke-width: 2px;
  filter: drop-shadow(4px 5px 2px #00000066);
}
```
